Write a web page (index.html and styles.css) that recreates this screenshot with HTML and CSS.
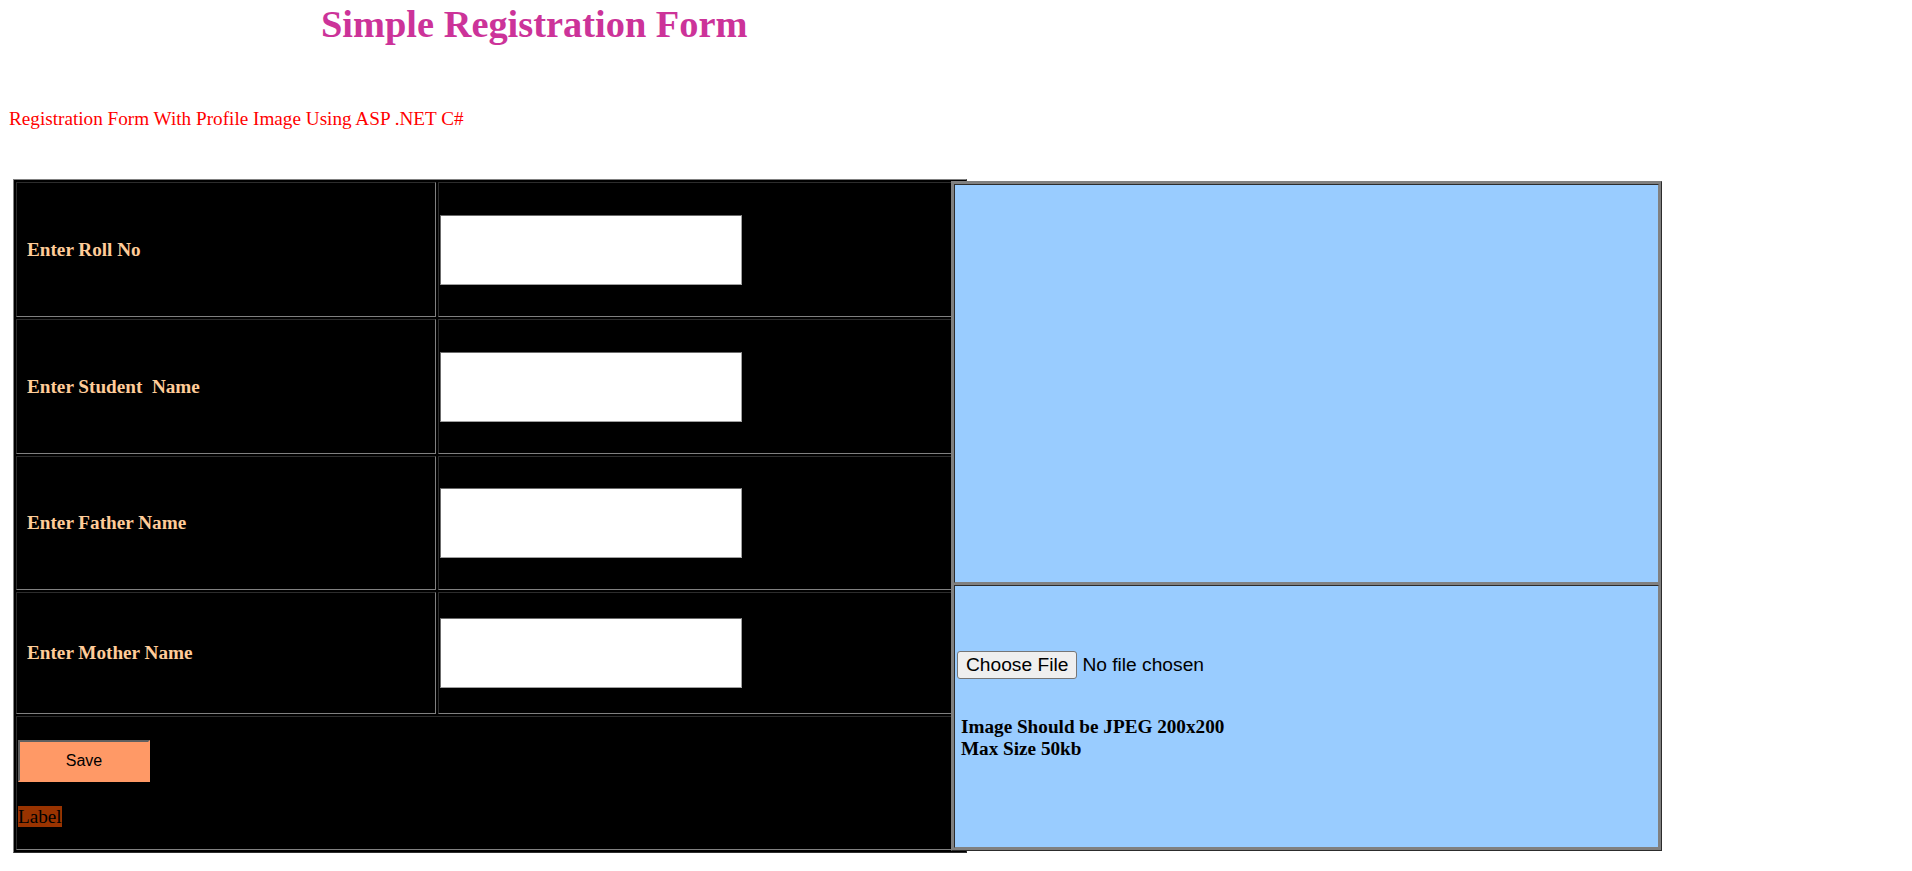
FILE: index.html
```html
<!DOCTYPE html>
<html lang="en">
<head>
<meta charset="utf-8">
<title>Simple Registration Form</title>
<link rel="stylesheet" href="styles.css">
</head>
<body>
<div class="page">
  <h1 class="title">Simple Registration Form</h1>
  <p class="subtitle">Registration Form With Profile Image Using ASP .NET C#</p>
  <div class="layout">
    <div class="form-grid">
      <div class="cell label-cell">Enter Roll No</div>
      <div class="cell input-cell"><input class="text-input" type="text"></div>
      <div class="cell label-cell">Enter Student&nbsp; Name</div>
      <div class="cell input-cell"><input class="text-input" type="text"></div>
      <div class="cell label-cell">Enter Father Name</div>
      <div class="cell input-cell"><input class="text-input" type="text"></div>
      <div class="cell label-cell">Enter Mother Name</div>
      <div class="cell input-cell"><input class="text-input" type="text"></div>
      <div class="cell action-cell">
        <button class="save-btn" type="button">Save</button>
        <span class="status-label">Label</span>
      </div>
    </div>
    <div class="photo-panel">
      <div class="photo-cell preview"></div>
      <div class="photo-cell upload">
        <input class="file-input" type="file">
        <div class="note">Image Should be JPEG 200x200<br>Max Size 50kb</div>
      </div>
    </div>
  </div>
</div>
</body>
</html>
```
FILE: styles.css
```css
* { box-sizing: border-box; }
body {
  margin: 0;
  background: #ffffff;
  font-family: "Liberation Serif", "Times New Roman", serif;
  font-size: 19.2px;
  color: #000;
}
.page { padding: 0 8px; }
.title {
  margin: 3px 0 0 313px;
  font-size: 38.4px;
  line-height: 43px;
  font-weight: bold;
  color: #cc3399;
}
.subtitle {
  margin: 62px 0 0 1px;
  font-size: 19.2px;
  line-height: 21px;
  color: #ff0000;
}
.layout {
  display: flex;
  align-items: flex-start;
  margin: 50px 0 0 5px;
}
.form-grid {
  flex: none;
  display: grid;
  grid-template-columns: 420px 526px;
  grid-template-rows: 135px 135px 134px 122px 134px;
  gap: 2px;
  padding: 2px;
  width: 954px;
  border: 1px outset #808080;
  background: #000;
}
.cell {
  display: flex;
  align-items: center;
  border: 1px inset #808080;
}
.label-cell {
  padding-left: 10px;
  color: #ffcc99;
  font-weight: bold;
}
.input-cell { padding-left: 1px; }
.text-input {
  width: 302px;
  height: 70px;
  border: 1px solid;
  border-color: #6b6b6b #a0a0a0 #a0a0a0 #6b6b6b;
  background: #fff;
}
.action-cell {
  grid-column: 1 / 3;
  flex-direction: column;
  align-items: flex-start;
  justify-content: center;
  gap: 24px;
  padding-left: 1px;
}
.save-btn {
  width: 132px;
  height: 42px;
  padding: 0;
  font-family: "Liberation Sans", Arial, sans-serif;
  font-size: 16px;
  color: #000;
  background: #ff9966;
  border: 2px solid;
  border-color: #5f5f5f #ff9966 #ff9966 #5f5f5f;
}
.status-label {
  background: #993300;
  color: #000;
  line-height: 21px;
}
.photo-panel {
  flex: none;
  display: flex;
  flex-direction: column;
  gap: 2px;
  width: 711px;
  height: 670px;
  margin: 2px 0 0 -16px;
  padding: 2px;
  border: 1px outset #808080;
  background: #808080;
}
.photo-cell {
  border: 1px inset #808080;
  background: #99ccff;
}
.preview { height: 399px; flex: none; }
.upload {
  flex: 1;
  padding: 65px 0 0 2px;
}
.file-input {
  display: block;
  font-family: "Liberation Sans", Arial, sans-serif;
  font-size: 19.2px;
  color: #000;
}
.file-input::file-selector-button {
  font: inherit;
  color: #000;
  padding: 2px 8px;
  margin: 0 5px 0 0;
  border: 1px solid #767676;
  border-radius: 3px;
  background: #efefef;
}
.note {
  margin-top: 37px;
  padding-left: 4px;
  font-weight: bold;
  line-height: 21.5px;
}
```
